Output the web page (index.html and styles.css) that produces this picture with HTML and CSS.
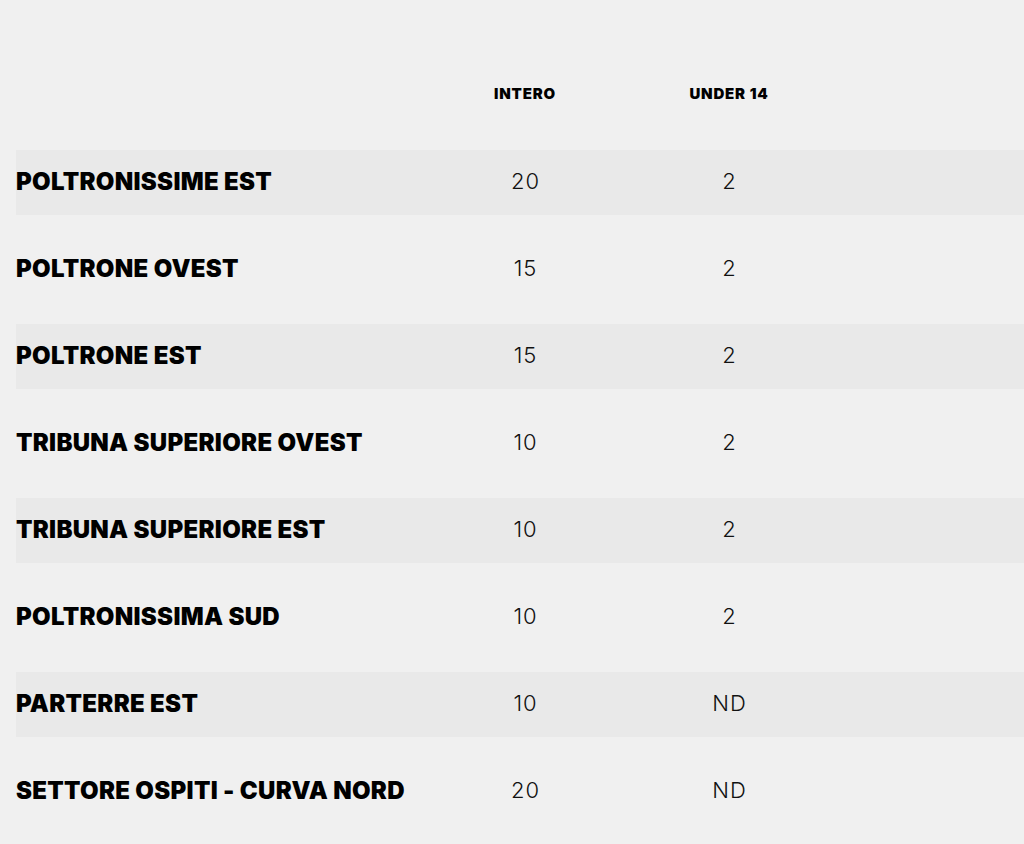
FILE: index.html
```html
<!DOCTYPE html>
<html lang="it">
<head>
<meta charset="utf-8">
<title>Prezzi</title>
<link rel="stylesheet" href="styles.css">
</head>
<body>
<div class="prices">
  <div class="row head">
    <div class="cell name"></div>
    <div class="cell num">INTERO</div>
    <div class="cell num">UNDER 14</div>
    <div class="cell"></div>
  </div>
  <div class="row alt">
    <div class="cell name">POLTRONISSIME EST</div>
    <div class="cell num val">20</div>
    <div class="cell num val">2</div>
    <div class="cell"></div>
  </div>
  <div class="row">
    <div class="cell name">POLTRONE OVEST</div>
    <div class="cell num val">15</div>
    <div class="cell num val">2</div>
    <div class="cell"></div>
  </div>
  <div class="row alt">
    <div class="cell name">POLTRONE EST</div>
    <div class="cell num val">15</div>
    <div class="cell num val">2</div>
    <div class="cell"></div>
  </div>
  <div class="row">
    <div class="cell name">TRIBUNA SUPERIORE OVEST</div>
    <div class="cell num val">10</div>
    <div class="cell num val">2</div>
    <div class="cell"></div>
  </div>
  <div class="row alt">
    <div class="cell name">TRIBUNA SUPERIORE EST</div>
    <div class="cell num val">10</div>
    <div class="cell num val">2</div>
    <div class="cell"></div>
  </div>
  <div class="row">
    <div class="cell name">POLTRONISSIMA SUD</div>
    <div class="cell num val">10</div>
    <div class="cell num val">2</div>
    <div class="cell"></div>
  </div>
  <div class="row alt">
    <div class="cell name">PARTERRE EST</div>
    <div class="cell num val">10</div>
    <div class="cell num val">ND</div>
    <div class="cell"></div>
  </div>
  <div class="row">
    <div class="cell name">SETTORE OSPITI - CURVA NORD</div>
    <div class="cell num val">20</div>
    <div class="cell num val">ND</div>
    <div class="cell"></div>
  </div>
</div>
</body>
</html>
```
FILE: styles.css
```css
html, body {
  margin: 0;
  padding: 0;
  background: #f0f0f0;
  overflow: hidden;
}
body {
  font-family: "Inter", "Liberation Sans", sans-serif;
  color: #000;
}
.prices {
  display: flex;
  flex-direction: column;
  gap: 22px;
  padding: 63px 0 0 16px;
}
.row {
  box-sizing: border-box;
  display: grid;
  grid-template-columns: 407px 204px 204px 1fr;
  height: 65px;
  padding-bottom: 3px;
  align-items: center;
}
.row.alt {
  background: #e9e9e9;
}
.cell.name {
  font-weight: 900;
  font-size: 24px;
  letter-spacing: 0.3px;
}
.cell.num {
  text-align: center;
}
.head .num {
  font-weight: 900;
  font-size: 15px;
  letter-spacing: 0.8px;
  padding-bottom: 2px;
}
.val {
  font-weight: 300;
  font-size: 22px;
  letter-spacing: 1px;
  text-indent: 1px;
  color: #111;
}
```
